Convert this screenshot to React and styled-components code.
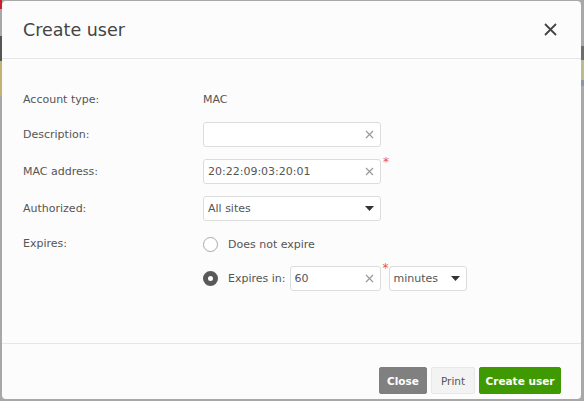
import React from 'react';
import styled, { createGlobalStyle } from 'styled-components';

const GlobalStyle = createGlobalStyle`
  html, body {
    margin: 0;
    padding: 0;
  }
  body {
    font-family: "DejaVu Sans", "Noto Sans", sans-serif;
    background: #a8a8a8;
  }
`;

// dimmed page behind the dialog, only a sliver of it shows at the edges
const Backdrop = styled.div`
  width: 584px;
  height: 401px;
  box-sizing: border-box;
  padding: 1px 3px 2px 2px;
  background:
    linear-gradient(to bottom, #c8202c 0 9px, #a8a8a8 9px 36px, #555 36px 61px, #c2b274 61px 96px, #a8a8a8 96px) left top / 2px 100% no-repeat,
    linear-gradient(to bottom, #a8a8a8 0 46px, #6d6d6d 46px 60px, #c2b98e 60px 80px, #8a97a8 80px 86px, #a8a8a8 86px) right top / 3px 100% no-repeat,
    #a8a8a8;
`;

const Modal = styled.div`
  height: 100%;
  background: #fcfcfc;
  border-radius: 4px;
  display: flex;
  flex-direction: column;
  overflow: hidden;
`;

const Header = styled.header`
  height: 57px;
  flex-shrink: 0;
  display: flex;
  align-items: center;
  justify-content: space-between;
  padding: 0 24px 0 21px;
  border-bottom: 1px solid #e6e6e6;
`;

const Title = styled.h2`
  margin: 1px 0 0;
  font-size: 17.5px;
  font-weight: 500;
  color: #444;
`;

const CloseIcon = styled.button`
  border: 0;
  background: none;
  padding: 0;
  width: 14px;
  height: 14px;
  display: grid;
  place-items: center;
  cursor: pointer;
`;

const Body = styled.div`
  flex: 1;
  padding: 29px 21px 0;
  display: flex;
  flex-direction: column;
  gap: 12px;
`;

const Row = styled.div`
  display: flex;
  align-items: center;
  min-height: ${(p) => p.$h || 25}px;
`;

const Label = styled.div`
  width: 180px;
  flex-shrink: 0;
  align-self: ${(p) => (p.$top ? 'flex-start' : 'center')};
  margin-top: ${(p) => (p.$top ? 4 : 0)}px;
  font-size: 11px;
  color: #555;
`;

const Value = styled.div`
  font-size: 11px;
  color: #555;
`;

const Options = styled.div`
  display: flex;
  flex-direction: column;
  gap: 10px;
`;

const Field = styled.div`
  width: ${(p) => p.$w || 178}px;
  height: 25px;
  box-sizing: border-box;
  border: 1px solid #dcdcdc;
  border-radius: 3px;
  background: #fff;
  display: flex;
  align-items: center;
  justify-content: space-between;
  padding: 0 6px 0 4px;
  font-size: 11px;
  color: #555;
`;

const Required = styled.span`
  align-self: flex-start;
  margin: -3px 0 0 2px;
  width: 6px;
  font-size: 12px;
  line-height: 12px;
  color: #f0504f;
`;

const Radio = styled.span`
  width: 15px;
  height: 15px;
  box-sizing: border-box;
  border-radius: 50%;
  flex-shrink: 0;
  background: #fff;
  border: ${(p) => (p.$checked ? '5px solid #595959' : '1.5px solid #a8a8a8')};
  margin-right: 10px;
`;

const RadioText = styled.span`
  font-size: 11px;
  color: #555;
  margin-right: ${(p) => p.$gap || 0}px;
`;

const OptionRow = styled.div`
  display: flex;
  align-items: center;
  min-height: ${(p) => p.$h}px;
`;

const Footer = styled.footer`
  height: 56px;
  flex-shrink: 0;
  border-top: 1px solid #e6e6e6;
  display: flex;
  justify-content: flex-end;
  align-items: flex-start;
  gap: 4px;
  padding: 23px 20px 0 0;
  box-sizing: border-box;
`;

const variants = {
  muted: { bg: '#808080', color: '#fff', border: '#808080' },
  light: { bg: '#f3f3f3', color: '#555', border: '#e8e8e8' },
  primary: { bg: '#3e9a00', color: '#fff', border: '#3e9a00' },
};

const Button = styled.button`
  height: 27px;
  width: ${(p) => p.$w}px;
  padding: 0;
  border-radius: 2px;
  border: 1px solid ${(p) => variants[p.$kind].border};
  background: ${(p) => variants[p.$kind].bg};
  color: ${(p) => variants[p.$kind].color};
  font-family: inherit;
  font-size: 10.5px;
  font-weight: ${(p) => (p.$kind === 'light' ? 400 : 600)};
  cursor: pointer;
`;

const ClearX = () => (
  <svg width="9" height="9" viewBox="0 0 9 9">
    <path d="M1 1L8 8M8 1L1 8" stroke="#9a9a9a" strokeWidth="1.2" />
  </svg>
);

const Caret = () => (
  <svg width="9" height="5" viewBox="0 0 9 5">
    <path d="M0 0H9L4.5 5Z" fill="#333" />
  </svg>
);

const TextInput = ({ value, w }) => (
  <Field $w={w}>
    <span>{value}</span>
    <ClearX />
  </Field>
);

const Select = ({ value, w }) => (
  <Field $w={w}>
    <span>{value}</span>
    <Caret />
  </Field>
);

export default function App() {
  return (
    <>
      <GlobalStyle />
      <Backdrop>
        <Modal>
          <Header>
            <Title>Create user</Title>
            <CloseIcon aria-label="close">
              <svg width="13" height="13" viewBox="0 0 13 13">
                <path d="M1 1L12 12M12 1L1 12" stroke="#444" strokeWidth="1.8" />
              </svg>
            </CloseIcon>
          </Header>

          <Body>
            <Row $h={22}>
              <Label>Account type:</Label>
              <Value>MAC</Value>
            </Row>
            <Row>
              <Label>Description:</Label>
              <TextInput value="" />
            </Row>
            <Row>
              <Label>MAC address:</Label>
              <TextInput value="20:22:09:03:20:01" />
              <Required>*</Required>
            </Row>
            <Row>
              <Label>Authorized:</Label>
              <Select value="All sites" />
            </Row>
            <Row>
              <Label $top>Expires:</Label>
              <Options>
                <OptionRow $h={22}>
                  <Radio />
                  <RadioText>Does not expire</RadioText>
                </OptionRow>
                <OptionRow $h={26}>
                  <Radio $checked />
                  <RadioText $gap={4}>Expires in:</RadioText>
                  <TextInput value="60" w={91} />
                  <Required>*</Required>
                  <Select value="minutes" w={78} />
                </OptionRow>
              </Options>
            </Row>
          </Body>

          <Footer>
            <Button $kind="muted" $w={48}>Close</Button>
            <Button $kind="light" $w={44}>Print</Button>
            <Button $kind="primary" $w={82}>Create user</Button>
          </Footer>
        </Modal>
      </Backdrop>
    </>
  );
}
